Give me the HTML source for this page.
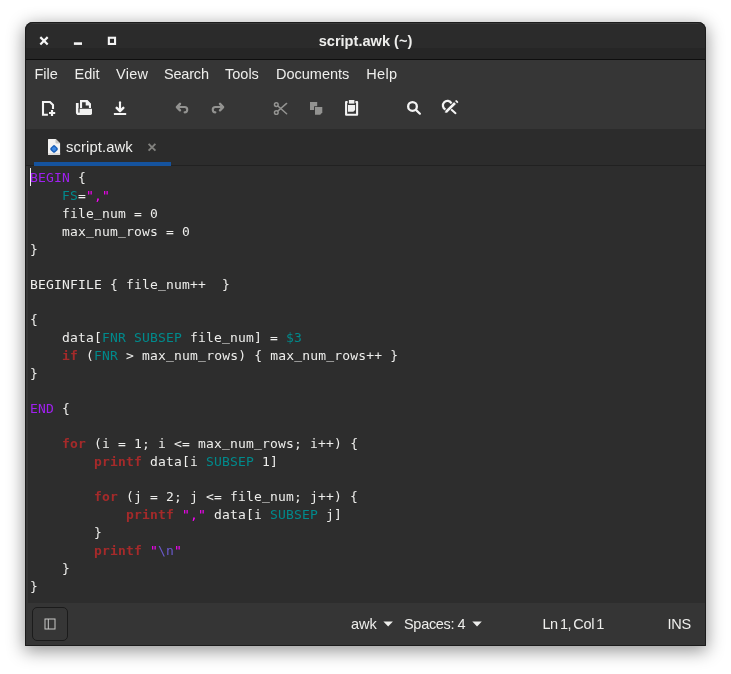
<!DOCTYPE html>
<html lang="en">
<head>
<meta charset="utf-8">
<title>script.awk (~)</title>
<style>
html,body{margin:0;padding:0;}
body{width:731px;height:674px;background:#ffffff;position:relative;overflow:hidden;font-family:"Liberation Sans",sans-serif;color:#eeeeec;}
.win{position:absolute;left:25px;top:22px;width:681px;height:624px;border-radius:8px 8px 0 0;background:#353535;
 box-shadow:0 4px 17px 0.5px rgba(0,0,0,0.42);}
.clip{will-change:transform;position:absolute;left:0;top:0;width:100%;height:100%;border-radius:8px 8px 0 0;overflow:hidden;}
.abs{position:absolute;}
.tb1{left:0;top:0;width:100%;height:26px;background:#2b2b2b;box-shadow:inset 0 2px 0 #383838;}
.frame{left:0;top:0;width:100%;height:100%;box-sizing:border-box;border:1px solid #1c1c1c;border-radius:8px 8px 0 0;pointer-events:none;}
.tb2{left:0;top:26px;width:100%;height:11px;background:#262626;}
.tbl{left:0;top:37px;width:100%;height:1px;background:#0e0e0e;}
.bar{left:0;top:38px;width:100%;height:69px;background:#363636;}
.tabs{left:0;top:107px;width:100%;height:36px;background:#2c2c2c;}
.tabl{left:0;top:143px;width:100%;height:1px;background:#212121;}
.edit{left:3px;top:144px;width:678px;height:437px;background:#2d2d2d;}
.stat{left:0;top:581px;width:100%;height:43px;background:#353535;}
.title{transform:translateY(0.6px);left:0;top:8px;width:100%;text-align:center;font-weight:bold;font-size:14.6px;line-height:20px;color:#eeeeec;}
.mi{top:42px;font-size:14.5px;line-height:20px;white-space:pre;color:#eeeeec;}
.tabt{left:41px;top:115px;font-size:14.8px;letter-spacing:0.1px;line-height:20px;white-space:pre;color:#eeeeec;}
.underline{left:9px;top:140px;width:137px;height:4px;background:#15539e;}
.ln{position:absolute;left:5px;height:18px;line-height:18px;font-family:"DejaVu Sans Mono","Liberation Mono",monospace;font-size:13px;letter-spacing:0.175px;white-space:pre;color:#eeeeec;}
.u{position:relative;top:-1px;}
.k{color:#a020f0;} .v{color:#008a8c;} .s{color:#ff00ff;} .b{color:#a52a2a;font-weight:bold;} .e{color:#6a5acd;}
.cursor{left:5px;top:146px;width:1px;height:18px;background:#eeeeec;}
.st{top:592px;font-size:14.5px;line-height:20px;white-space:pre;color:#eeeeec;}
.sbtn{left:7px;top:585px;width:34px;height:32px;border:1px solid #1b1b1b;border-radius:5px;background:#363636;}
svg{position:absolute;left:0;top:0;overflow:visible;}
</style>
</head>
<body>
<div class="win">
<div class="clip">
 <div class="abs tb1"></div>
 <div class="abs tb2"></div>
 <div class="abs tbl"></div>
 <div class="abs bar"></div>
 <div class="abs tabs"></div>
 <div class="abs tabl"></div>
 <div class="abs edit"></div>
 <div class="abs stat"></div>

 <div class="abs title">script.awk (~)</div>

 <div class="abs mi" style="left:9.5px">File</div>
 <div class="abs mi" style="left:49.5px">Edit</div>
 <div class="abs mi" style="left:91px;letter-spacing:0.25px">View</div>
 <div class="abs mi" style="left:139px;letter-spacing:-0.2px">Search</div>
 <div class="abs mi" style="left:200px">Tools</div>
 <div class="abs mi" style="left:251px">Documents</div>
 <div class="abs mi" style="left:341.3px;letter-spacing:0.3px">Help</div>

 <div class="abs underline"></div>
 <div class="abs tabt">script.awk</div>

 <div class="abs cursor"></div>
<div class="ln" style="top:147px"><span class="k">BEGIN</span> {</div>
<div class="ln" style="top:165px">    <span class="v">FS</span>=<span class="s">","</span></div>
<div class="ln" style="top:183px">    file<span class="u">_</span>num = 0</div>
<div class="ln" style="top:201px">    max<span class="u">_</span>num<span class="u">_</span>rows = 0</div>
<div class="ln" style="top:219px">}</div>
<div class="ln" style="top:254px">BEGINFILE { file<span class="u">_</span>num++  }</div>
<div class="ln" style="top:289px">{</div>
<div class="ln" style="top:307px">    data[<span class="v">FNR</span> <span class="v">SUBSEP</span> file<span class="u">_</span>num] = <span class="v">$3</span></div>
<div class="ln" style="top:325px">    <span class="b">if</span> (<span class="v">FNR</span> &gt; max<span class="u">_</span>num<span class="u">_</span>rows) { max<span class="u">_</span>num<span class="u">_</span>rows++ }</div>
<div class="ln" style="top:343px">}</div>
<div class="ln" style="top:378px"><span class="k">END</span> {</div>
<div class="ln" style="top:413px">    <span class="b">for</span> (i = 1; i &lt;= max<span class="u">_</span>num<span class="u">_</span>rows; i++) {</div>
<div class="ln" style="top:431px">        <span class="b">printf</span> data[i <span class="v">SUBSEP</span> 1]</div>
<div class="ln" style="top:466px">        <span class="b">for</span> (j = 2; j &lt;= file<span class="u">_</span>num; j++) {</div>
<div class="ln" style="top:484px">            <span class="b">printf</span> <span class="s">","</span> data[i <span class="v">SUBSEP</span> j]</div>
<div class="ln" style="top:502px">        }</div>
<div class="ln" style="top:520px">        <span class="b">printf</span> <span class="s">"</span><span class="e">\n</span><span class="s">"</span></div>
<div class="ln" style="top:538px">    }</div>
<div class="ln" style="top:556px">}</div>

 <div class="abs sbtn"></div>
 <div class="abs st" style="left:326px">awk</div>
 <div class="abs st" style="left:379px;letter-spacing:-0.3px;word-spacing:-0.6px">Spaces: 4</div>
 <div class="abs st" style="left:517.4px;letter-spacing:-0.35px;word-spacing:-1.6px">Ln 1, Col 1</div>
 <div class="abs st" style="left:642.4px;letter-spacing:-0.15px">INS</div>

 <!-- all icons drawn in absolute page coordinates, shifted by the window origin -->
 <svg width="681" height="624" viewBox="25 22 681 624" fill="none">
  <!-- window buttons -->
  <g stroke="#f4f4f4" stroke-width="2.2" stroke-linecap="butt">
   <path d="M40.3 37.1 L47.7 44.5 M47.7 37.1 L40.3 44.5"/>
  </g>
  <rect x="73.9" y="42.3" width="8.1" height="2.6" fill="#f4f4f4"/>
  <rect x="108.85" y="37.75" width="6.2" height="6.2" stroke="#f4f4f4" stroke-width="2.1"/>

  <!-- new document -->
  <g stroke="#f4f4f4" stroke-width="2.1" stroke-linejoin="miter">
   <path d="M47.9 114.8 H43 V102 H50 L53 105 V109"/>
   <path d="M49 113 H55.2 M52 110 V116" stroke-width="2.2"/>
  </g>
  <!-- open -->
  <g stroke="#f4f4f4" stroke-width="2.1" stroke-linejoin="miter">
   <path d="M81.05 108 V101.15 H87 L89.95 104.1 V108"/>
   <path d="M77.25 103 V112.3 Q77.25 113.75 78.7 113.75 H90" stroke-width="2.7"/>
  </g>
  <path d="M85.7 101 V105.4 H90.5 V103.6 L87.3 100.4 Z" fill="#f4f4f4"/>
  <path d="M79.3 108.8 H92 V113.6 Q92 115 90.6 115 H79.3 Z" fill="#f1f1f0"/>
  <path d="M78.95 108 V112.7" stroke="#363636" stroke-width="0.7"/>
  <!-- save / download -->
  <g stroke="#f4f4f4" stroke-width="2.1" stroke-linecap="round" stroke-linejoin="round">
   <path d="M120 102.2 V110.5"/>
   <path d="M116.7 107.9 L120 111.1 L123.3 107.9" stroke-width="2.5"/>
  </g>
  <rect x="113.9" y="113" width="12.3" height="2.1" rx="0.5" fill="#f4f4f4"/>

  <!-- undo / redo (disabled) -->
  <g stroke="#939391" stroke-width="2.1" stroke-linecap="round" stroke-linejoin="round">
   <path d="M180 103.8 L176.9 107.05 L180 110.3" stroke-width="2.4"/>
   <path d="M177.5 107.05 H184.6 A2.65 2.65 0 0 1 184.6 112.35"/>
   <path d="M220 103.8 L223.1 107.05 L220 110.3" stroke-width="2.4"/>
   <path d="M222.5 107.05 H215.4 A2.65 2.65 0 0 0 215.4 112.35"/>
  </g>

  <!-- cut -->
  <g stroke="#939391" stroke-width="1.45" stroke-linecap="round">
   <circle cx="276.3" cy="104.6" r="1.85"/>
   <circle cx="276.3" cy="112.5" r="1.85"/>
   <path d="M277.8 106 L286.6 113.7 M277.8 111.1 L286.6 103.4"/>
  </g>
  <!-- copy -->
  <path d="M310 102.1 H317.2 V106.2 H314.1 V110 H310 Z" fill="#939391"/>
  <path d="M315 107 H322.3 V112.6 L320.2 114.8 H315 Z" fill="#939391"/>
  <!-- paste -->
  <g stroke="#f4f4f4" stroke-width="2.1" stroke-linejoin="round">
   <path d="M347.6 102 H346.1 V114.8 H357.1 V102 H355.4"/>
  </g>
  <rect x="348.9" y="100" width="5.5" height="3.6" fill="#f0f0ef"/>
  <path d="M348 105 H355.1 V110 L353.3 111.8 H348 Z" fill="#f0f0ef"/>

  <!-- search -->
  <g stroke="#f4f4f4" stroke-width="2.1" stroke-linecap="round">
   <circle cx="412.5" cy="106.45" r="4.35" stroke-width="2.3"/>
   <path d="M415.9 109.9 L419.9 113.7" stroke-width="2.2"/>
  </g>
  <!-- search & replace -->
  <g stroke="#f4f4f4" stroke-width="2.1" stroke-linecap="butt">
   <path d="M445.5 109.48 A4.5 4.5 0 1 1 451.48 103.5" stroke-width="2.25"/>
   <path d="M451.6 109.8 L455.5 113.2" stroke-width="2" stroke-linecap="round"/>
  </g>
  <path d="M444.8 113.1 L445 110.8 L454.1 101.8 L456.3 104 L447.1 113 Z" fill="#f4f4f4" stroke="#363636" stroke-width="0.6"/>
  <path d="M455 101 L456.2 99.9 Q457.9 100.6 458.4 102.2 L457.2 103.3 Z" fill="#f4f4f4"/>

  <!-- tab file icon -->
  <path d="M48.6 139 H55.8 L60.1 143.2 V154.4 Q60.1 155 59.5 155 H48.6 Q48 155 48 154.4 V139.6 Q48 139 48.6 139 Z" fill="#f3f2f1"/>
  <path d="M48 153 H60.1 V154.4 Q60.1 155 59.5 155 H48.6 Q48 155 48 154.4 Z" fill="#dedcd9"/>
  <path d="M55.5 139 L60.1 143.5 H56.3 Q55.5 143.5 55.5 142.7 Z" fill="#c6c4c1"/>
  <rect x="50.85" y="145.75" width="6.4" height="6.4" rx="1.7" transform="rotate(45 54.05 148.95)" fill="#1b61ba"/>
  <rect x="52.25" y="147.15" width="3.6" height="3.6" rx="1.2" transform="rotate(45 54.05 148.95)" fill="#3d88e3"/>
  <!-- tab close -->
  <path d="M148.6 143.8 L155.4 150.6 M155.4 143.8 L148.6 150.6" stroke="#82827f" stroke-width="1.85"/>

  <!-- status bar side-panel icon -->
  <rect x="45" y="619" width="10" height="10" stroke="#c9c9c7" stroke-width="1"/>
  <path d="M48.3 619 V629" stroke="#c9c9c7" stroke-width="1"/>
  <!-- combo arrows -->
  <path d="M383.4 621.4 H392.9 L388.15 626.4 Z" fill="#eeeeec"/>
  <path d="M472.3 621.4 H481.8 L477.05 626.4 Z" fill="#eeeeec"/>
 </svg>
 <div class="abs frame"></div>
</div>
</div>
</body>
</html>
